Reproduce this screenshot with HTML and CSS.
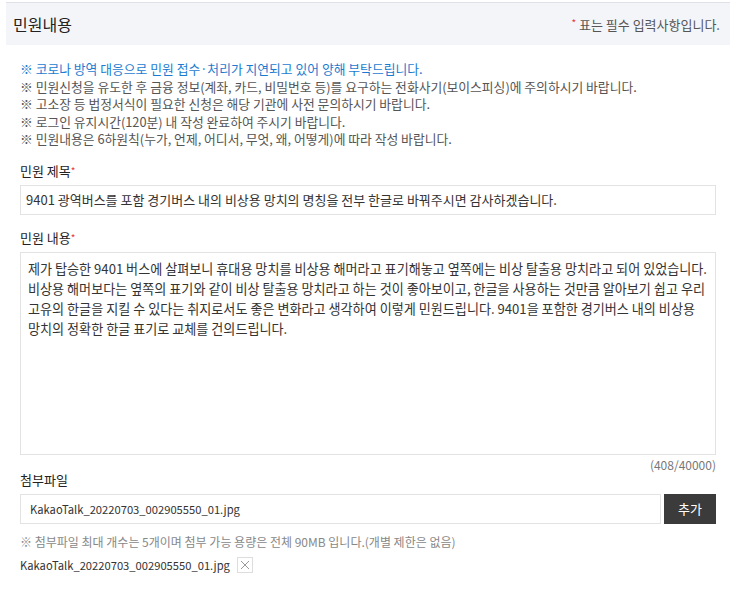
FILE: index.html
```html
<!DOCTYPE HTML>
<html>
<head>
<meta charset="utf-8">
<title>민원내용</title>
<link rel="stylesheet" href="styles.css">
</head>
<body>
<div class="cv_wrap">
	<!-- 제목 -->
	<div class="cv-hd">
		<h2 class="cv-tit">민원내용</h2>
		<p class="cv-req"><em>*</em> 표는 필수 입력사항입니다.</p>
	</div>
	<div class="cv-bd">
		<!-- 안내 -->
		<ul class="cv-notice">
			<li class="cv-blue">※ 코로나 방역 대응으로 민원 접수·처리가 지연되고 있어 양해 부탁드립니다.</li>
			<li>※ 민원신청을 유도한 후 금융 정보(계좌, 카드, 비밀번호 등)를 요구하는 전화사기(보이스피싱)에 주의하시기 바랍니다.</li>
			<li>※ 고소장 등 법정서식이 필요한 신청은 해당 기관에 사전 문의하시기 바랍니다.</li>
			<li>※ 로그인 유지시간(120분) 내 작성 완료하여 주시기 바랍니다.</li>
			<li>※ 민원내용은 6하원칙(누가, 언제, 어디서, 무엇, 왜, 어떻게)에 따라 작성 바랍니다.</li>
		</ul>
		<!-- 민원 제목 -->
		<div class="cv-row">
			<label class="cv-lb">민원 제목<em>*</em></label>
			<div class="cv-ipt">9401 광역버스를 포함 경기버스 내의 비상용 망치의 명칭을 전부 한글로 바꿔주시면 감사하겠습니다.</div>
		</div>
		<!-- 민원 내용 -->
		<div class="cv-row">
			<label class="cv-lb">민원 내용<em>*</em></label>
			<div class="cv-area">제가 탑승한 9401 버스에 살펴보니 휴대용 망치를 비상용 해머라고 표기해놓고 옆쪽에는 비상 탈출용 망치라고 되어 있었습니다.<br>비상용 해머보다는 옆쪽의 표기와 같이 비상 탈출용 망치라고 하는 것이 좋아보이고, 한글을 사용하는 것만큼 알아보기 쉽고 우리<br>고유의 한글을 지킬 수 있다는 취지로서도 좋은 변화라고 생각하여 이렇게 민원드립니다. 9401을 포함한 경기버스 내의 비상용<br>망치의 정확한 한글 표기로 교체를 건의드립니다.</div>
			<p class="cv-count">(408/40000)</p>
		</div>
		<!-- 첨부파일 -->
		<div class="cv-row cv-row-file">
			<label class="cv-lb">첨부파일</label>
			<div class="cv-file">
				<div class="cv-ipt">KakaoTalk_20220703_002905550_01.jpg</div>
				<a href="javascript:;" class="cv-btn">추가</a>
			</div>
			<p class="cv-info">※ 첨부파일 최대 개수는 5개이며 첨부 가능 용량은 전체 90MB 입니다.(개별 제한은 없음)</p>
			<div class="cv-list">
				<span>KakaoTalk_20220703_002905550_01.jpg</span>
				<a href="javascript:;" class="cv-del">
					<svg width="10" height="10" viewBox="0 0 10 10"><path d="M1 1L9 9M9 1L1 9" stroke="#999" stroke-width="1"/></svg>
				</a>
			</div>
		</div>
	</div>
</div>
</body>
</html>
```

FILE: styles.css
```css
body{margin:0;background:#fff;}
.cv_wrap{width:743px;font-family:"Noto Sans CJK KR","Liberation Sans",sans-serif;color:#333;font-size:13px;}
.cv_wrap *{margin:0;padding:0;list-style:none;box-sizing:border-box;}
.cv_wrap em{font-style:normal;color:#e8383d;}
.cv-hd{margin:2px 13px 0 6px;height:43px;background:#f4f5f9;border-top:1px solid #dfe1e6;display:flex;align-items:center;justify-content:space-between;padding:0 10px 0 7px;}
.cv-tit{font-size:16px;font-weight:normal;color:#222;}
.cv-req{font-size:13px;color:#555;}
.cv-req em{font-size:10px;vertical-align:top;}
.cv-bd{padding:15px 27px 0 20px;}
.cv-notice{margin-bottom:1px;}
.cv-notice li{font-size:12.8px;line-height:17.5px;color:#555;white-space:nowrap;}
.cv-notice .cv-blue{color:#1a7bd0;}
.cv-row{margin-top:14px;}
.cv-lb{display:block;font-size:13px;line-height:18px;color:#222;margin-bottom:5px;}
.cv-lb em{font-size:10px;vertical-align:top;}
.cv-ipt{height:30px;line-height:28px;border:1px solid #e3e3e3;padding:0 5px;font-size:13px;color:#333;white-space:nowrap;overflow:hidden;}
.cv-area{height:203px;border:1px solid #e3e3e3;padding:6px 7px;font-size:13.1px;line-height:20px;color:#333;white-space:nowrap;overflow:hidden;}
.cv-count{text-align:right;font-size:12px;color:#777;line-height:14px;margin-top:3px;}
.cv-row-file{margin-top:0;}
.cv-row-file .cv-lb{line-height:16px;margin-bottom:6px;}
.cv-file{display:flex;gap:3px;}
.cv-file .cv-ipt{flex:1;padding:0 9px;font-size:11.2px;}
.cv-btn{width:52px;height:30px;line-height:30px;background:#3b3b3b;color:#fff;text-align:center;text-decoration:none;font-size:13px;}
.cv-info{font-size:12px;color:#888;line-height:16px;margin-top:10px;}
.cv-list{margin-top:7px;display:flex;align-items:center;gap:7px;font-size:11.2px;color:#333;}
.cv-del{width:16px;height:16px;border:1px solid #ddd;display:flex;align-items:center;justify-content:center;}
```
